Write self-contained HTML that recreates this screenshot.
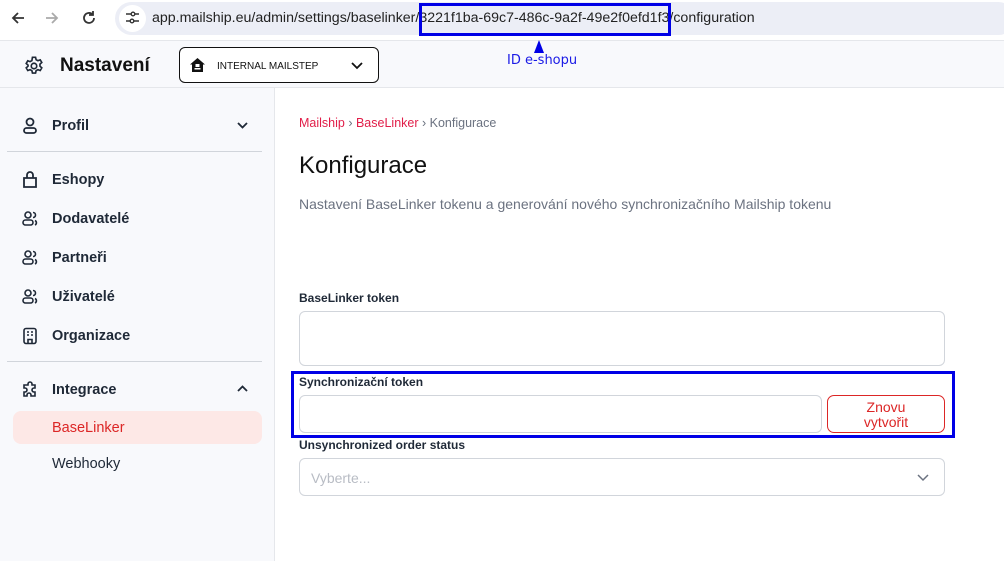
<!DOCTYPE html>
<html><head><meta charset="utf-8"><style>
*{box-sizing:border-box;margin:0;padding:0}
body{width:1004px;height:561px;overflow:hidden;font-family:"Liberation Sans",sans-serif;background:#fff;position:relative;color:#1f2937}
.abs{position:absolute}
.side{left:0;top:88px;width:275px;height:473px;background:#f8f9fc;border-right:1px solid #e5e7eb}
.item{position:absolute;left:22px;font-size:14.5px;font-weight:bold;color:#1f2937;display:flex;align-items:center}
.item svg{margin-right:14px}
.lbl{font-size:12px;font-weight:bold;color:#1f2937;position:absolute;left:299px}
.inp{position:absolute;border:1px solid #d1d5db;border-radius:6px;background:#fff}
</style></head><body>
<div class="abs" style="left:0;top:0;width:1004px;height:41px;background:#fff;border-bottom:1px solid #e5e7eb"></div>
<svg class="abs" style="left:10px;top:10px" width="16" height="16" viewBox="0 0 16 16"><path d="M14 8H3M8 3L3 8l5 5" stroke="#333" stroke-width="1.8" fill="none"/></svg>
<svg class="abs" style="left:44px;top:10px" width="16" height="16" viewBox="0 0 16 16"><path d="M2 8h11M8 3l5 5-5 5" stroke="#aaa" stroke-width="1.8" fill="none"/></svg>
<svg class="abs" style="left:80px;top:9px" width="18" height="18" viewBox="0 0 18 18"><path d="M14 9a5 5 0 1 1-1.5-3.6M13 2v4h-4" stroke="#333" stroke-width="1.8" fill="none"/></svg>
<div class="abs" style="left:115px;top:2px;width:900px;height:33px;border-radius:17px;background:#eceef6"></div>
<div class="abs" style="left:119px;top:5px;width:27px;height:27px;border-radius:50%;background:#fff"></div>
<svg class="abs" style="left:125px;top:11px" width="15" height="14" viewBox="0 0 15 14"><path d="M1 3h5M10 3h4M1 10h4M9 10h5" stroke="#333" stroke-width="1.6"/><circle cx="8" cy="3" r="1.8" fill="none" stroke="#333" stroke-width="1.4"/><circle cx="7" cy="10" r="1.8" fill="none" stroke="#333" stroke-width="1.4"/></svg>
<div class="abs" style="left:152px;top:10px;font-size:14.2px;color:#222;white-space:nowrap">app.mailship.eu/admin/settings/baselinker/3221f1ba-69c7-486c-9a2f-49e2f0efd1f3/configuration</div>
<div class="abs" style="left:419px;top:3px;width:252px;height:33px;border:3px solid #0000e6"></div>
<div class="abs" style="left:0;top:41px;width:1004px;height:47px;background:#f8f9fc;border-bottom:1px solid #e5e7eb"></div>
<svg class="abs" style="left:23px;top:55px" width="22" height="22" viewBox="0 0 24 24" fill="none" stroke="#1f2937" stroke-width="1.8"><circle cx="12" cy="12" r="3"/><path d="M10.3 2.5h3.4l.6 2.6 2 1.1 2.5-.9 1.7 2.9-2 1.8v2.2l2 1.8-1.7 2.9-2.5-.9-2 1.1-.6 2.6h-3.4l-.6-2.6-2-1.1-2.5.9-1.7-2.9 2-1.8V11l-2-1.8 1.7-2.9 2.5.9 2-1.1z"/></svg>
<div class="abs" style="left:60px;top:55px;font-size:19px;font-weight:bold;color:#111">Nastavení</div>
<div class="abs" style="left:179px;top:47px;width:200px;height:36px;border:1px solid #111;border-radius:6px;background:#fff"></div>
<svg class="abs" style="left:190px;top:58px" width="15" height="14" viewBox="0 0 15 14"><path d="M7.5 0L0 6.5h2V14h11V6.5h2z" fill="#111"/><rect x="5.5" y="6" width="4" height="3" fill="#fff"/><rect x="4.5" y="10" width="6" height="1.5" fill="#fff"/></svg>
<div class="abs" style="left:217px;top:61px;font-size:10px;color:#111">INTERNAL MAILSTEP</div>
<svg class="abs" style="left:351px;top:62px" width="12" height="8" viewBox="0 0 12 8"><path d="M1 1l5 5 5-5" stroke="#111" stroke-width="1.8" fill="none"/></svg>
<div class="abs" style="left:507px;top:53px;font-size:13px;color:#1a1ae6;font-family:'DejaVu Sans',sans-serif">ID e-shopu</div>
<svg class="abs" style="left:533px;top:40px" width="12" height="14"><path d="M6 0L11 13H1z" fill="#0000e6"/></svg>
<div class="abs side"></div>
<div class="item" style="top:117px"><svg width="16" height="18" viewBox="0 0 16 18" fill="none" stroke="#1f2937" stroke-width="1.8"><circle cx="8" cy="5" r="3.5"/><rect x="2" y="11" width="12" height="5" rx="2.5"/></svg>Profil</div>
<svg class="abs" style="left:237px;top:122px" width="11" height="7"><path d="M1 1l4.5 4.5L10 1" stroke="#1f2937" stroke-width="1.8" fill="none"/></svg>
<div class="abs" style="left:7px;top:151px;width:255px;height:1px;background:#d1d5db"></div>
<div class="item" style="top:171px"><svg width="16" height="18" viewBox="0 0 16 18" fill="none" stroke="#1f2937" stroke-width="1.8"><path d="M2 7h12v9H2zM5 7V4a3 3 0 0 1 6 0v3"/></svg>Eshopy</div>
<div class="item" style="top:210px"><svg width="16" height="18" viewBox="0 0 16 18" fill="none" stroke="#1f2937" stroke-width="1.6"><circle cx="6" cy="5" r="3"/><rect x="1" y="10" width="10" height="5" rx="2.5"/><path d="M11 2.5a2.5 2.5 0 0 1 0 5M13 10.5a2.5 2.5 0 0 1 0 4.5"/></svg>Dodavatelé</div>
<div class="item" style="top:249px"><svg width="16" height="18" viewBox="0 0 16 18" fill="none" stroke="#1f2937" stroke-width="1.6"><circle cx="6" cy="5" r="3"/><rect x="1" y="10" width="10" height="5" rx="2.5"/><path d="M11 2.5a2.5 2.5 0 0 1 0 5M13 10.5a2.5 2.5 0 0 1 0 4.5"/></svg>Partneři</div>
<div class="item" style="top:288px"><svg width="16" height="18" viewBox="0 0 16 18" fill="none" stroke="#1f2937" stroke-width="1.6"><circle cx="6" cy="5" r="3"/><rect x="1" y="10" width="10" height="5" rx="2.5"/><path d="M11 2.5a2.5 2.5 0 0 1 0 5M13 10.5a2.5 2.5 0 0 1 0 4.5"/></svg>Uživatelé</div>
<div class="item" style="top:327px"><svg width="16" height="18" viewBox="0 0 16 18" fill="none" stroke="#1f2937" stroke-width="1.6"><rect x="2" y="1.5" width="12" height="15" rx="2"/><path d="M5 5h2M9 5h2M5 8h2M9 8h2M6 16.5v-4h4v4"/></svg>Organizace</div>
<div class="abs" style="left:7px;top:361px;width:255px;height:1px;background:#d1d5db"></div>
<div class="item" style="top:381px"><svg width="16" height="18" viewBox="0 0 16 18" fill="none" stroke="#1f2937" stroke-width="1.6"><path d="M6 3a2 2 0 0 1 4 0v1h3v3h-1a2 2 0 0 0 0 4h1v4H9v-1a2 2 0 0 0-4 0v1H2v-4h1a2 2 0 0 0 0-4H2V4h4z"/></svg>Integrace</div>
<svg class="abs" style="left:237px;top:385px" width="11" height="7"><path d="M1 6l4.5-4.5L10 6" stroke="#1f2937" stroke-width="1.8" fill="none"/></svg>
<div class="abs" style="left:13px;top:411px;width:249px;height:33px;background:#fde8e6;border-radius:8px"></div>
<div class="abs" style="left:52px;top:420px;font-size:14.5px;color:#dc2626">BaseLinker</div>
<div class="abs" style="left:52px;top:456px;font-size:14.5px;color:#1f2937">Webhooky</div>
<div class="abs" style="left:299px;top:116px;font-size:12.5px;color:#6b7280"><span style="color:#e11d48">Mailship</span> › <span style="color:#e11d48">BaseLinker</span> › Konfigurace</div>
<div class="abs" style="left:299px;top:152px;font-size:24px;color:#111">Konfigurace</div>
<div class="abs" style="left:299px;top:196px;font-size:14px;color:#6b7280">Nastavení BaseLinker tokenu a generování nového synchronizačního Mailship tokenu</div>
<div class="lbl" style="top:291px">BaseLinker token</div>
<div class="inp" style="left:299px;top:311px;width:646px;height:55px"></div>
<div class="abs" style="left:291px;top:371px;width:664px;height:67px;border:3px solid #0000e6"></div>
<div class="lbl" style="top:375px">Synchronizační token</div>
<div class="inp" style="left:299px;top:395px;width:523px;height:38px"></div>
<div class="abs" style="left:827px;top:395px;width:118px;height:38px;border:1px solid #dc2626;border-radius:7px;background:#fff;color:#dc2626;font-size:14px;text-align:center;line-height:15px;padding-top:4px">Znovu<br>vytvořit</div>
<div class="lbl" style="top:438px">Unsynchronized order status</div>
<div class="inp" style="left:299px;top:458px;width:646px;height:38px"></div>
<div class="abs" style="left:311px;top:470px;font-size:14px;color:#b8bcc4">Vyberte...</div>
<svg class="abs" style="left:917px;top:474px" width="12" height="8"><path d="M1 1l5 5 5-5" stroke="#6b7280" stroke-width="1.5" fill="none"/></svg>
</body></html>
